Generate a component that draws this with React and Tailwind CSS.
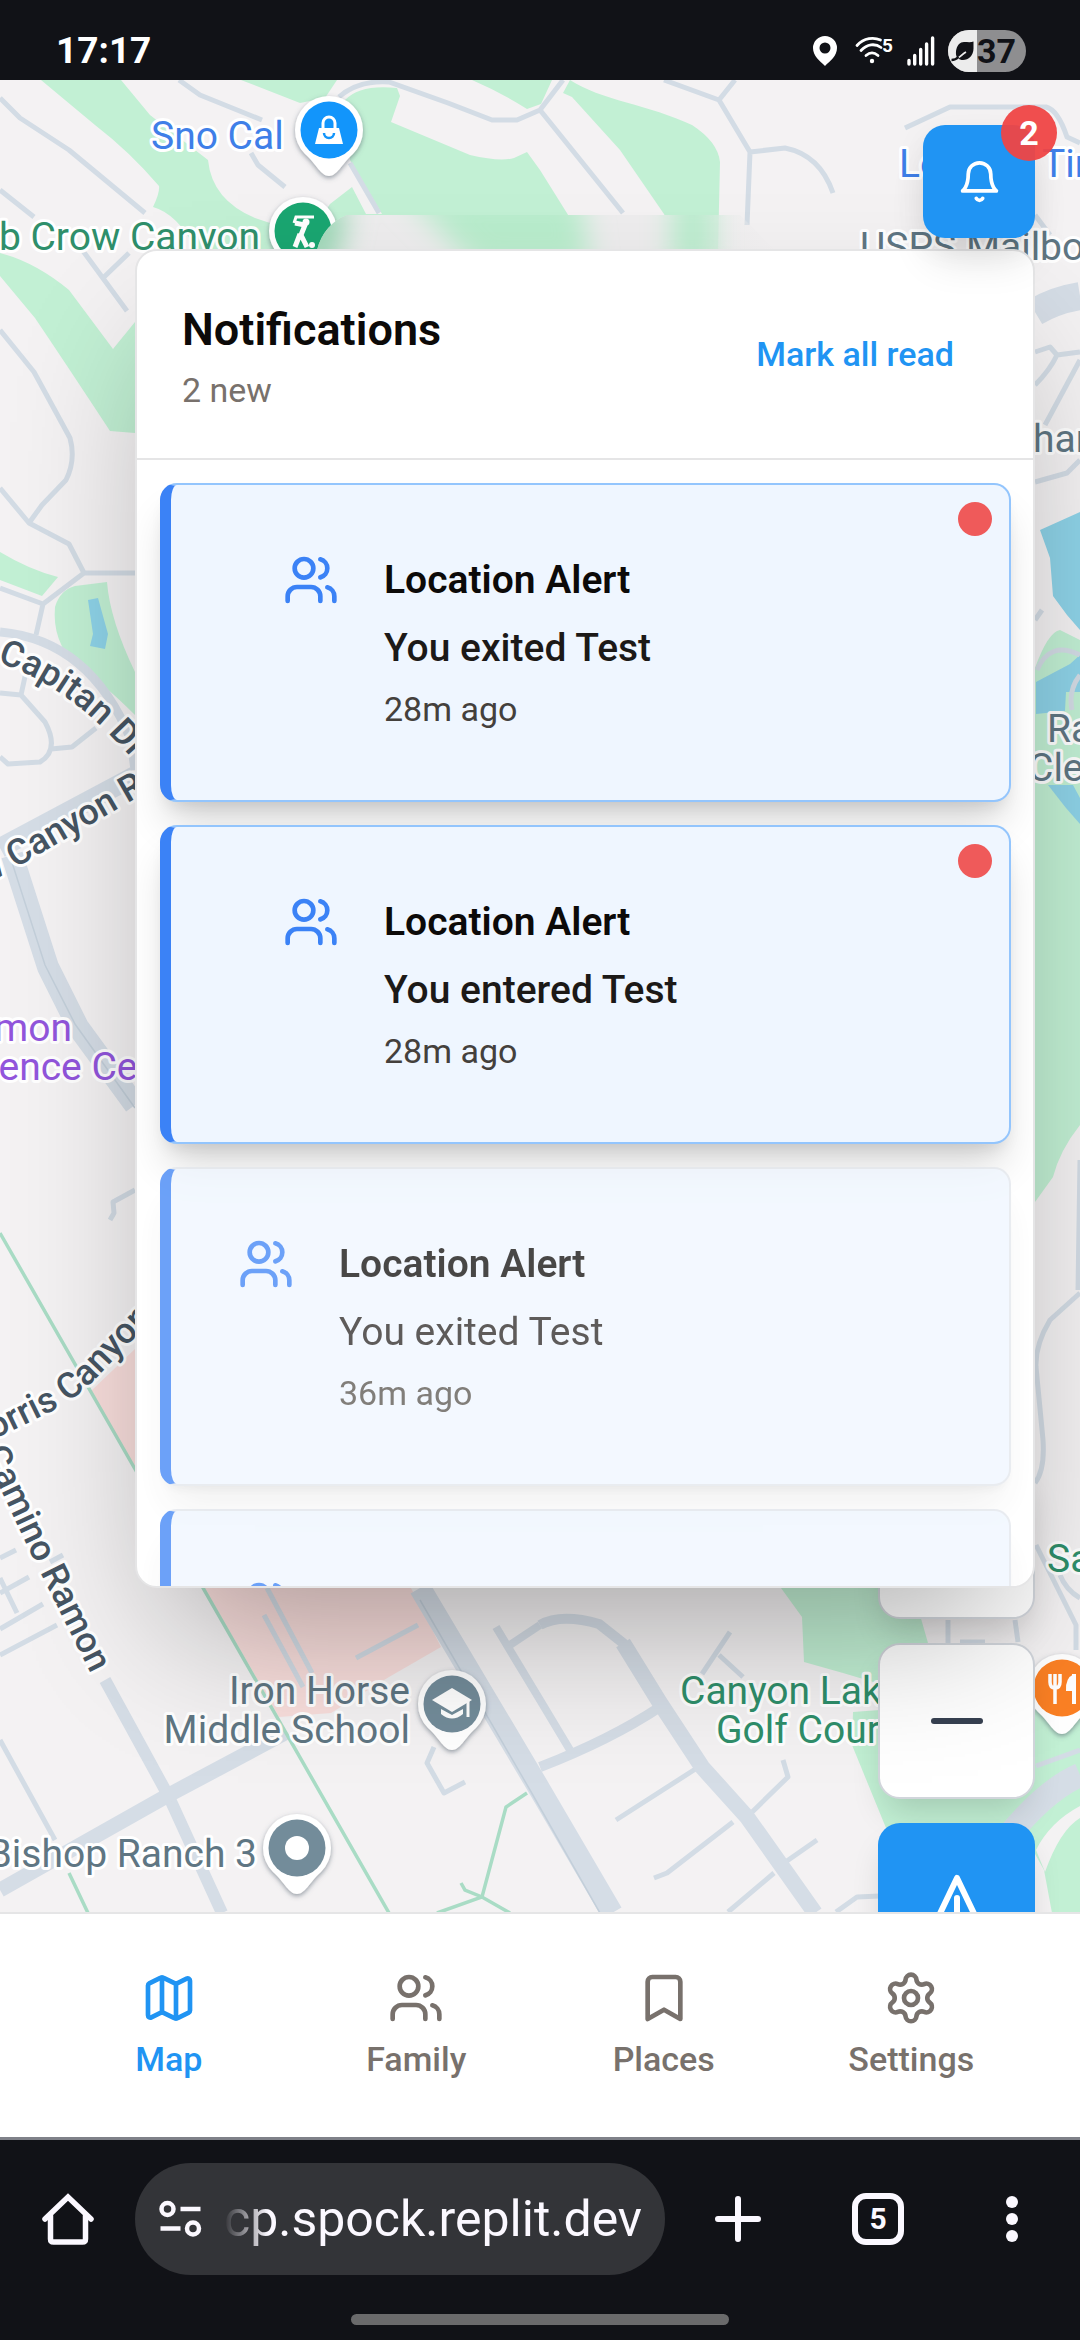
import React from "react";
import { Users, Map as MapIcon, Bookmark, Settings } from "lucide-react";

const NOTIFICATIONS = [
  { id: 1, title: "Location Alert", text: "You exited Test", time: "28m ago", unread: true },
  { id: 2, title: "Location Alert", text: "You entered Test", time: "28m ago", unread: true },
  { id: 3, title: "Location Alert", text: "You exited Test", time: "36m ago", unread: false },
  { id: 4, title: "Location Alert", text: "You entered Test", time: "36m ago", unread: false },
];

const TABS = [
  { label: "Map", Icon: MapIcon, active: true },
  { label: "Family", Icon: Users, active: false },
  { label: "Places", Icon: Bookmark, active: false },
  { label: "Settings", Icon: Settings, active: false },
];

function StatusBar() {
  return (
    <header className="flex h-[80px] shrink-0 items-center justify-between bg-[#111217] pt-[22px] pr-[54px] pl-[56px] text-white">
      <time className="text-[37px] leading-[40px] font-bold">17:17</time>
      <div className="flex items-center">
        <svg width="24" height="30" viewBox="0 0 24 30" className="mr-[18px]" aria-label="Location in use">
          <path fillRule="evenodd" fill="#fff" d="M12 0a12 12 0 0 0-12 12c0 8 7 13 12 18 5-5 12-10 12-18A12 12 0 0 0 12 0Zm0 6.500a5.500 5.500 0 1 1 0 11 5.500 5.500 0 0 1 0-11Z" />
        </svg>
        <svg width="38" height="30" viewBox="0 0 38 30" className="mr-[14px]" aria-label="Wi-Fi 5">
          <g fill="none" stroke="#fff" strokeWidth="2.800" strokeLinecap="round">
            <path d="M2 9.500C9 1.500 19 1 25.500 4" />
            <path d="M6 14.500c6-6.500 14-7.500 20-3" />
            <path d="M11 19.500c4-3.500 8-3.500 12 0" />
          </g>
          <circle cx="17" cy="25" r="2.200" fill="#fff" />
          <text x="27" y="16" fontSize="19" fontWeight="700" fill="#fff">5</text>
        </svg>
        <svg width="28" height="30" viewBox="0 0 28 30" className="mr-[13px]" aria-label="Signal">
          <g stroke="#fff" strokeWidth="3.400" strokeLinecap="round">
            <path d="M2 24.500V28M7.700 19.500V28M13.700 13.500V28M19.600 8V28M25.600 2V28" />
          </g>
        </svg>
        <div className="relative flex h-[42px] w-[78px] items-center overflow-hidden rounded-full bg-[#8e8e90] text-[#111217]">
          <div className="flex h-full w-[29px] items-center justify-center bg-[#ececec]">
            <svg width="23" height="24" viewBox="0 0 23 24" aria-hidden="true">
              <path d="M22.500 2.500v7c0 7-5 11.500-10.500 11.500-2 0-4-.7-5-1.500C3 16 5 3 13 3c4 0 7 .5 9.500-.5Z" fill="#111217" />
              <path d="M3 21c5-1 8-6 12-8" stroke="#ececec" strokeWidth="1.800" fill="none" />
              <path d="M.5 21c3 0 5-1 7-3" stroke="#111217" strokeWidth="2.400" fill="none" />
            </svg>
          </div>
          <span className="text-[34px] leading-[42px] font-bold">37</span>
        </div>
      </div>
    </header>
  );
}

function Pin({ x, y, color, children }) {
  return (
    <g transform={`translate(${x} ${y})`}>
      <path d="M0 46C-8 46-12 35-24 24A34 34 0 1 1 24 24C12 35 8 46 0 46Z" fill="#fff" filter="url(#pinShadow)" />
      <circle r="28.500" fill={color} />
      {children}
    </g>
  );
}

function MapCanvas() {
  return (
    <svg
      className="absolute inset-0 h-full w-full"
      viewBox="0 80 1080 1832"
      preserveAspectRatio="xMidYMin slice"
      role="img"
      aria-label="Street map"
    >
      <defs>
        <filter id="pinShadow" x="-30%" y="-30%" width="160%" height="160%">
          <feDropShadow dx="0" dy="2" stdDeviation="2.500" floodColor="#51606e" floodOpacity="0.600" />
        </filter>
        <filter id="haze" x="-50%" y="-50%" width="200%" height="200%">
          <feGaussianBlur stdDeviation="14" />
        </filter>
        <clipPath id="hazeClip">
          <path d="M317 250Q324 224 347 215H740L775 250Z" />
        </clipPath>
        <linearGradient id="hazeEdge" x1="0" x2="1" y1="0" y2="0">
          <stop offset="0.800" stopColor="#eeedee" />
          <stop offset="1" stopColor="#eeedee" stopOpacity="0" />
        </linearGradient>
        <path id="capitanPath" d="M-3 662C45 678 92 708 150 780" />
        <path id="norrisPath" d="M-30 1449Q-5 1440 62 1406Q84 1392 100 1374L180 1290" />
        <path id="caminoPath" d="M-17 1452L30 1552L140 1772" />
      </defs>

      <rect x="0" y="0" width="1080" height="2000" fill="#f4f2f3" />

      <g fill="#c2f0d4">
        <path d="M41 80H121L150 115L208 160Q212 200 255 218L285 228L300 250H196Q178 214 153 207Q160 192 159 186Q130 152 95 125Z" />
        <path d="M241 80H337L325 98L300 103Z" />
        <path d="M345 100Q360 84 397 88L400 96L391 122L470 155Q500 162 514 158L527 152L540 170L590 250H300L330 204L352 187L366 214H382L350 160Z" />
        <path d="M472 80H552L541 104L527 109Q500 92 472 80Z" />
        <path d="M570 80C600 100 650 105 692 125Q718 142 720 162L718 250H680L664 214L620 150L572 97L563 93Z" />
        <path d="M0 253Q35 262 69 290L113 349L135 322V433L110 431Q70 370 35 318L0 276Z" />
        <path d="M0 552Q30 570 58 577L42 596L0 580Z" />
        <path d="M55 607Q60 590 75 586L107 582Q110 620 135 672V715Q100 680 75 665Q52 640 55 607Z" />
        <path d="M1035 668Q1048 632 1060 630L1080 640V1125Q1060 1150 1053 1177L1035 1202Z" />
        <path d="M781 1588H900L920 1615L928 1643L900 1690L843 1673L804 1662L802 1617Z" />
        <path d="M853 1712L880 1710H1035L1080 1690V1913H1052L1044 1870L1030 1845H893L852 1745Z" />
      </g>
      <path d="M1036 1850Q1050 1822 1080 1806V1818Q1060 1830 1045 1872Z" fill="#f4f2f3" />
      <g fill="#8ed3e8">
        <path d="M88 600L98 598L108 634L105 649L90 646L93 634Z" />
        <path d="M1040 530L1080 512V630L1067 615L1053 596L1050 558Z" />
        <path d="M1036 682L1070 664L1080 655V692L1066 692L1065 711L1036 714Z" />
        <path d="M1048 785H1073L1080 798V824L1066 808Z" />
      </g>
      <path d="M135 1349L91 1391L279 1717L331 1713L389 1677L441 1647L411 1588L300 1349Z" fill="#f9dedc" />

      <g fill="none" stroke="#d3dce5" strokeWidth="5" strokeLinejoin="round">
        <path d="M0 98L20 118L69 150L145 213M0 190L34 217M179 80L200 95L262 120M251 153L258 165L285 187" />
        <path d="M339 97Q358 80 389 82L448 103L492 120H517L540 110L563 80M350 163L379 213M540 110L623 213" />
        <path d="M664 80L719 100L735 80M719 100L750 152L747 225M750 152L785 148Q820 155 833 193" />
        <path d="M905 128L950 107H1046Q1058 110 1067 137L1080 143M1035 215L1050 235" />
        <path d="M0 330L34 372L70 438Q76 460 66 480L42 505L29 523L0 488M29 523L69 544L84 573H135M84 573L43 604L0 588M43 604L36 635" />
        <path d="M0 693L21 695L45 722Q60 750 40 762L8 764L0 757M51 749L72 747L96 728M21 695L26 672M83 251L127 311M103 278L129 253" />
        <path d="M1035 352L1050 347L1057 355L1080 352M1057 355Q1050 370 1035 385M1080 360L1045 425M1035 482L1067 473L1080 460M1035 620L1042 610" />
        <path d="M1037 670Q1050 640 1080 655M1072 710Q1068 690 1080 675" />
        <path d="M110 1220L114 1213L113 1202L135 1190" />
        <path d="M0 1558L16 1550M0 1593L29 1577M0 1629L43 1604M0 1655L57 1625M0 1578L17 1613M50 1562L63 1555M0 1740L55 1840" />
        <path d="M267 1588L312 1673M264 1615L303 1687M356 1658L418 1625M434 1747L427 1763L444 1793L465 1782" />
        <path d="M730 1632L702 1674M719 1655L743 1677M697 1768L616 1820M733 1822L667 1873L654 1878M774 1873L728 1912M747 1817L788 1777L783 1760M784 1863L817 1840M836 1912L857 1897L880 1896" />
        <path d="M948 1620V1643M1015 1620L1018 1642M960 1642H985M1036 1545L1076 1625V1650M1060 1575Q1066 1590 1080 1598M1080 1293L1050 1320Q1035 1345 1036 1367L1043 1440Q1045 1470 1035 1483M1080 1160L1078 1290M1036 1766L1080 1750" />
      </g>
      <g fill="none" stroke="#d5dde6" strokeLinejoin="round">
        <path d="M0 632Q90 640 131 740L135 770" strokeWidth="9" />
        <path d="M0 848L135 776" strokeWidth="20" />
        <path d="M12 855L48 967L78 1027L135 1105" strokeWidth="22" />
        <path d="M105 1680L169 1797L222 1913" strokeWidth="12" />
        <path d="M0 1890L165 1797L285 1733" strokeWidth="15" />
        <path d="M420 1588L540 1790L612 1913" strokeWidth="22" />
        <path d="M496 1627L540 1700L570 1750M510 1645L540 1625" strokeWidth="8" />
        <path d="M540 1625Q561 1613 599 1624L623 1643L660 1703" strokeWidth="10" />
        <path d="M623 1643L660 1703L702 1767L747 1817L815 1913" strokeWidth="16" />
        <path d="M660 1707Q610 1740 540 1767" strokeWidth="10" />
        <path d="M1035 312Q1055 300 1080 296" strokeWidth="28" />
        <path d="M1005 1840Q1045 1790 1080 1775" strokeWidth="24" />
      </g>
      <g fill="none" stroke="#c3cfda" strokeWidth="1.500">
        <path d="M8 850L45 965L75 1024L135 1108M420 1600L530 1790L600 1913" />
      </g>
      <g fill="none" stroke="#a9dcc5" strokeWidth="3.500">
        <path d="M0 1233L135 1469L389 1913M69 1873L88 1913" />
        <path d="M527 1793L506 1807L482 1897L437 1913M461 1883L465 1890L482 1897L510 1913" />
      </g>

      <g
        fontFamily="Roboto, sans-serif"
        fontSize="39"
        stroke="#fff"
        strokeWidth="6"
        strokeLinejoin="round"
        paintOrder="stroke"
      >
        <g fill="#3f7fe8">
          <text x="151" y="149">Sno Cal</text>
          <text x="899" y="177">Lo</text>
          <text x="1042" y="177">Tires</text>
        </g>
        <g fill="#2f8f6b">
          <text x="260" y="250" textAnchor="end">Club Crow Canyon</text>
          <text x="680" y="1704">Canyon Lakes</text>
          <text x="716" y="1743">Golf Course</text>
          <text x="1047" y="1572">Sa</text>
        </g>
        <g fill="#5f7683">
          <text x="860" y="260">USPS Mailbox</text>
          <text x="1033" y="452">har</text>
          <text x="1047" y="742">Ra</text>
          <text x="1028" y="781">Clea</text>
          <text x="410" y="1704" textAnchor="end">Iron Horse</text>
          <text x="410" y="1743" textAnchor="end">Middle School</text>
          <text x="257" y="1867" textAnchor="end">Bishop Ranch 3</text>
        </g>
        <g fill="#9255dc">
          <text x="72" y="1041" textAnchor="end">Ramon</text>
          <text x="-11" y="1080">ience Center</text>
        </g>
        <g fill="#465563" fontSize="36" fontWeight="500">
          <text><textPath href="#capitanPath">Capitan Dr</textPath></text>
          <text transform="translate(-16 886) rotate(-30)">w Canyon Rd</text>
          <text><textPath href="#norrisPath">Norris Canyon</textPath></text>
          <text><textPath href="#caminoPath">Camino Ramon</textPath></text>
          <text transform="translate(212 1925) rotate(62)">Camino</text>
        </g>
      </g>

      <Pin x={329} y={130} color="#1295fb">
        <path d="M-10-2H10L14 14H-14Z" fill="#fff" />
        <path d="M-6 0V-7a6 6 0 0 1 12 0V0" fill="none" stroke="#fff" strokeWidth="3" />
        <path d="M-5 3a5 5 0 0 0 10 0" fill="none" stroke="#1295fb" strokeWidth="2.500" />
      </Pin>
      <Pin x={303} y={231} color="#1aa671">
        <path d="M-9-8L-7-14H11" fill="none" stroke="#fff" strokeWidth="3" />
        <circle cx="3" cy="-9" r="3.500" fill="#fff" />
        <path d="M-8-8L2-6L-2 4L4 16M-3 3L-8 16" fill="none" stroke="#fff" strokeWidth="5" />
        <circle cx="9" cy="14" r="3" fill="#fff" />
      </Pin>
      <Pin x={452} y={1704} color="#738c9a">
        <path d="M0-16L-20-4L0 8L20-4Z" fill="#fff" />
        <path d="M-11 5V10Q0 19 11 10V5L0 11Z" fill="#fff" />
        <path d="M16-3V13" stroke="#fff" strokeWidth="3" />
      </Pin>
      <Pin x={297} y={1848} color="#738c9a">
        <circle r="12" fill="#fff" />
      </Pin>
      <Pin x={1062} y={1688} color="#fb8024">
        <path d="M-7-14V16M-12-14V-6Q-12 0-7 0T-2-6V-14" fill="none" stroke="#fff" strokeWidth="3.500" />
        <path d="M12-14V16" stroke="#fff" strokeWidth="4" />
        <path d="M12-14Q3-10 4 3H12Z" fill="#fff" />
      </Pin>

      <g clipPath="url(#hazeClip)">
        <rect x="300" y="210" width="480" height="44" fill="url(#hazeEdge)" />
        <g filter="url(#haze)">
          <path d="M300 200L350 205L335 270H290Z" fill="#9fd9b8" />
          <path d="M400 190H580L590 270H480Z" fill="#b9edcd" />
          <path d="M672 190H712V270H672Z" fill="#b9edcd" />
        </g>
      </g>
    </svg>
  );
}

function BellButton() {
  return (
    <button
      type="button"
      aria-label="Notifications, 2 unread"
      className="relative z-20 flex h-[113px] w-[112px] items-center justify-center rounded-[22px] bg-[#2094f3] text-white shadow-[0_28px_42px_-8px_rgba(0,0,0,0.12),0_8px_34px_rgba(0,0,0,0.06)]"
    >
      <svg width="45" height="45" viewBox="0 0 24 24" fill="none" stroke="currentColor" strokeWidth="2" strokeLinecap="round" strokeLinejoin="round" aria-hidden="true">
        <path d="M6 8a6 6 0 0 1 12 0c0 7 3 9 3 9H3s3-2 3-9" />
        <path d="M10.300 21a1.940 1.940 0 0 0 3.400 0" />
      </svg>
      <span className="absolute -top-5 -right-[22px] flex h-14 w-14 items-center justify-center rounded-full bg-[#ef4444]/95 text-[34px] leading-[45px] font-bold">
        2
      </span>
    </button>
  );
}

function NotificationCard({ item }) {
  const base = "relative flex shrink-0 items-start rounded-[17px] border-2 border-l-[11px] border-l-[#3b82f6] bg-[#eff6ff] pt-[67px] pb-[68px]";
  return (
    <li
      className={
        item.unread
          ? `${base} border-[#93c5fd] pl-[112px] shadow-[0_28px_42px_-8px_rgba(0,0,0,0.16),0_11px_17px_-8px_rgba(0,0,0,0.12)]`
          : `${base} border-[#e2e6ec] pl-[67px] opacity-75 shadow-[0_28px_42px_-8px_rgba(0,0,0,0.08),0_8px_12px_-6px_rgba(0,0,0,0.08)]`
      }
    >
      <Users size={56} className="shrink-0 text-[#3b82f6]" aria-hidden="true" />
      <div className="ml-[45px] flex flex-col">
        <h3 className="text-[39px] leading-[56px] font-semibold text-[#0c0a09]">{item.title}</h3>
        <p className={item.unread ? "mt-3 text-[39px] leading-[56px] font-medium text-[#1c1917]" : "mt-3 text-[39px] leading-[56px] text-[#292524]"}>
          {item.text}
        </p>
        <p className={item.unread ? "mt-[11px] text-[34px] leading-[45px] text-[#44403c]" : "mt-[11px] text-[34px] leading-[45px] text-[#57534e]"}>
          {item.time}
        </p>
      </div>
      {item.unread && <span className="absolute top-[17px] right-[17px] h-[34px] w-[34px] rounded-full bg-[#ef5a5a]" aria-label="Unread" />}
    </li>
  );
}

function NotificationPanel() {
  return (
    <section
      aria-label="Notifications"
      className="relative z-10 mt-[11px] flex max-h-[1339px] w-full flex-col overflow-hidden rounded-[22px] border-2 border-[#e5e5e6] bg-white shadow-[0_70px_140px_-34px_rgba(0,0,0,0.32)]"
    >
      <div className="flex items-center justify-between border-b-2 border-[#e5e5e6] p-[45px]">
        <div>
          <h2 className="text-[45px] leading-[68px] font-semibold text-[#0c0a09]">Notifications</h2>
          <p className="mt-1 text-[34px] leading-[45px] text-[#78716c]">2 new</p>
        </div>
        <button type="button" className="px-[34px] text-[34px] leading-[45px] font-medium text-[#2094f3]">
          Mark all read
        </button>
      </div>
      <ul className="flex min-h-0 flex-col gap-[23px] overflow-hidden py-[23px] pr-[22px] pl-[23px]">
        {NOTIFICATIONS.map((item) => (
          <NotificationCard key={item.id} item={item} />
        ))}
      </ul>
    </section>
  );
}

function MapControls() {
  const zoom = "flex h-[156px] w-full items-center justify-center rounded-[22px] border-2 border-[#d1d5db] bg-white text-[#374151] shadow-[0_20px_34px_-8px_rgba(0,0,0,0.16)]";
  return (
    <div className="absolute right-[45px] -bottom-[67px] flex w-[157px] flex-col gap-6">
      <button type="button" aria-label="Zoom in" className={zoom}>
        <svg width="56" height="56" viewBox="0 0 56 56" stroke="currentColor" strokeWidth="6" strokeLinecap="round" aria-hidden="true">
          <path d="M5 28H51M28 5V51" />
        </svg>
      </button>
      <button type="button" aria-label="Zoom out" className={zoom}>
        <svg width="56" height="56" viewBox="0 0 56 56" stroke="currentColor" strokeWidth="6" strokeLinecap="round" aria-hidden="true">
          <path d="M5 28H51" />
        </svg>
      </button>
      <button type="button" aria-label="Compass" className="flex h-[156px] w-full items-center justify-center rounded-[22px] bg-[#2094f3] text-white shadow-[0_20px_34px_-8px_rgba(0,0,0,0.16)]">
        <svg width="68" height="56" viewBox="0 0 68 56" fill="none" stroke="currentColor" strokeWidth="6" strokeLinecap="round" strokeLinejoin="round" aria-hidden="true">
          <path d="M34 5L56 51L34 41L12 51ZM34 25V41" />
        </svg>
      </button>
    </div>
  );
}

function TabBar() {
  return (
    <nav className="z-20 flex h-[225px] shrink-0 items-center border-t-2 border-[#e5e5e6] bg-white px-[45px] pt-px">
      {TABS.map(({ label, Icon, active }) => (
        <button
          key={label}
          type="button"
          aria-current={active ? "page" : undefined}
          className={active ? "flex flex-1 flex-col items-center gap-[11px] text-[#2094f3]" : "flex flex-1 flex-col items-center gap-[11px] text-[#78716c]"}
        >
          <Icon size={56} aria-hidden="true" />
          <span className="text-[34px] leading-[45px] font-medium">{label}</span>
        </button>
      ))}
    </nav>
  );
}

function BrowserBar() {
  return (
    <footer className="flex shrink-0 flex-col items-center border-t-[3px] border-[#7f8189] bg-[#111217] pt-[23px] pb-[15px] text-[#fbf8ff]">
      <div className="flex w-full items-center">
        <button type="button" aria-label="Home" className="flex w-[135px] justify-center">
          <svg width="54" height="54" viewBox="0 0 54 54" fill="none" stroke="currentColor" strokeWidth="5.500" strokeLinecap="round" aria-hidden="true">
            <path d="M4 27L27 5L50 27" strokeLinejoin="miter" />
            <path d="M9.500 24V47Q9.500 50 12.500 50H41.500Q44.500 50 44.500 47V24" />
          </svg>
        </button>
        <div className="flex h-[112px] min-w-0 flex-1 items-center rounded-full bg-[#333438] pr-[14px] pl-6">
          <button type="button" aria-label="Site settings" className="shrink-0">
            <svg width="43" height="38" viewBox="0 0 43 38" fill="none" stroke="currentColor" strokeWidth="4.500" aria-hidden="true">
              <circle cx="8.500" cy="9" r="6" />
              <path d="M21.500 9H41.500M1.500 28.500H21.500" />
              <circle cx="34" cy="28.500" r="6" />
            </svg>
          </button>
          <input
            type="text"
            readOnly
            aria-label="Address"
            value="cp.spock.replit.dev"
            className="ml-[22px] w-full min-w-0 flex-1 bg-transparent text-[50px] leading-[64px] outline-none [mask-image:linear-gradient(to_right,transparent,black_44px)]"
          />
        </div>
        <div className="flex w-[415px] shrink-0 items-center">
          <button type="button" aria-label="New tab" className="ml-[48px] flex w-[50px] justify-center">
            <svg width="50" height="50" viewBox="0 0 50 50" stroke="currentColor" strokeWidth="6" strokeLinecap="round" aria-hidden="true">
              <path d="M5 25H45M25 5V45" />
            </svg>
          </button>
          <button
            type="button"
            aria-label="5 open tabs"
            className="ml-[89px] flex h-[52px] w-[52px] items-center justify-center rounded-[14px] border-[6px] border-[#fbf8ff] text-[30px] leading-[36px] font-bold"
          >
            5
          </button>
          <button type="button" aria-label="More options" className="ml-[90px] flex w-[36px] justify-center">
            <svg width="12" height="48" viewBox="0 0 12 48" fill="currentColor" aria-hidden="true">
              <circle cx="6" cy="7" r="6" />
              <circle cx="6" cy="24" r="6" />
              <circle cx="6" cy="41" r="6" />
            </svg>
          </button>
        </div>
      </div>
      <div className="mt-[39px] h-[11px] w-[378px] rounded-full bg-[#6a6a6b]" />
    </footer>
  );
}

export default function App() {
  return (
    <div className="flex h-screen flex-col overflow-hidden font-['Roboto',sans-serif]">
      <StatusBar />
      <main className="relative flex min-h-0 flex-1 flex-col items-end overflow-hidden pt-[45px] pr-[45px] pl-[135px]">
        <MapCanvas />
        <MapControls />
        <BellButton />
        <NotificationPanel />
      </main>
      <TabBar />
      <BrowserBar />
    </div>
  );
}
